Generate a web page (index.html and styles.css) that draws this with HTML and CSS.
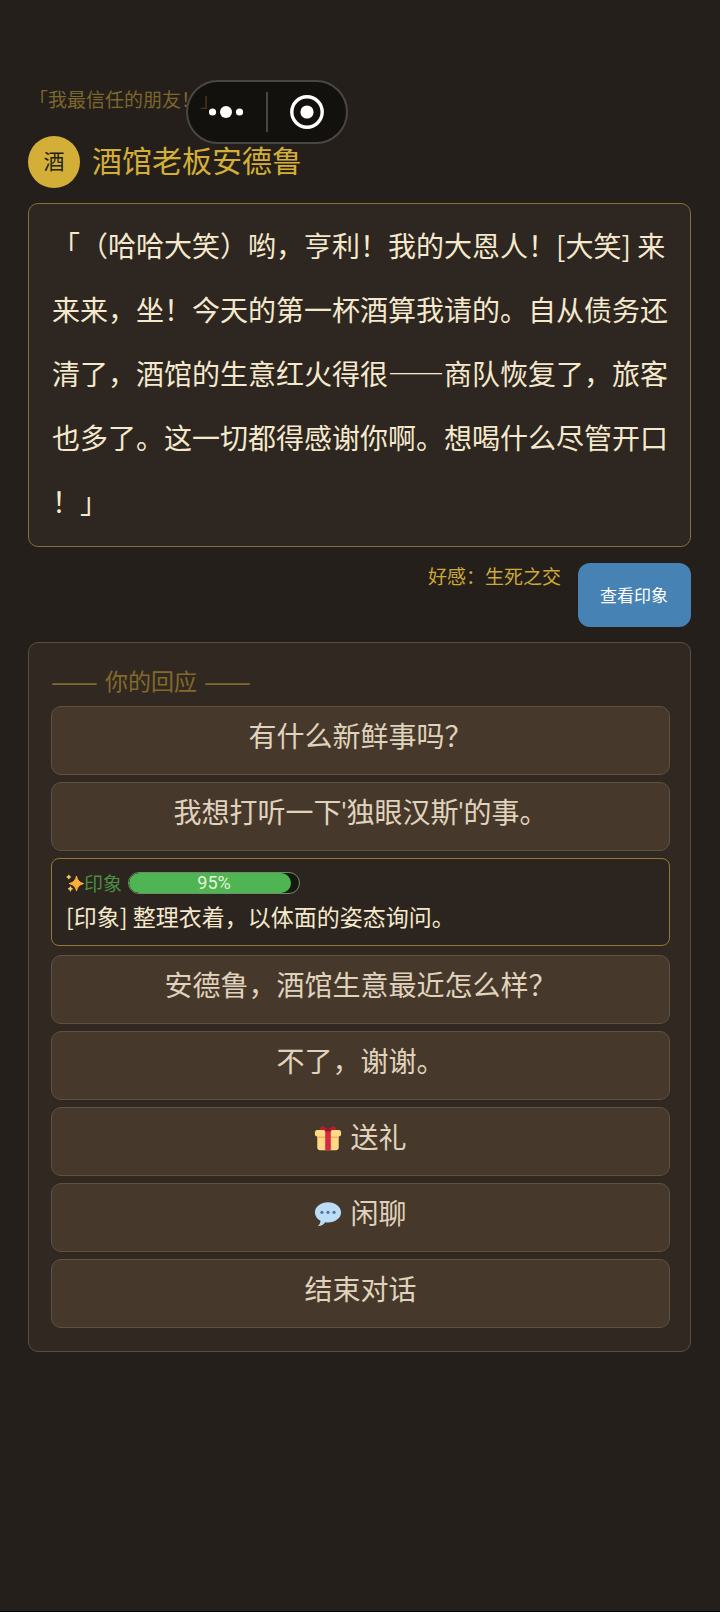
FILE: index.html
```html
<!DOCTYPE html>
<html lang="zh-CN">
<head>
<meta charset="utf-8">
<meta name="viewport" content="width=device-width, initial-scale=1">
<title>酒馆老板安德鲁</title>
<link rel="stylesheet" href="styles.css">
</head>
<body>
<nav class="capsule">
  <button class="capsule-btn" type="button" aria-label="更多">
    <svg width="36" height="36" viewBox="0 0 36 36" fill="#fff"><circle cx="3.500" cy="18" r="3.6"/><circle cx="17" cy="18" r="6"/><circle cx="30.500" cy="18" r="3.6"/></svg>
  </button>
  <span class="capsule-line"></span>
  <button class="capsule-btn" type="button" aria-label="关闭">
    <svg width="36" height="36" viewBox="0 0 36 36"><circle cx="18" cy="18" r="15.2" fill="none" stroke="#fff" stroke-width="3.4"/><circle cx="18" cy="18" r="6.6" fill="#fff"/></svg>
  </button>
</nav>
<main class="page">
  <p class="motto">「我最信任的朋友！」</p>
  <header class="npc">
    <span class="avatar">酒</span>
    <h1 class="npc-name">酒馆老板安德鲁</h1>
  </header>
  <p class="speech">「（哈哈大笑）哟，亨利！我的大恩人！[大笑] 来来来，坐！今天的第一杯酒算我请的。自从债务还清了，酒馆的生意红火得很——商队恢复了，旅客也多了。这一切都得感谢你啊。想喝什么尽管开口！」</p>
  <div class="status">
    <span class="affinity">好感：生死之交</span>
    <button class="view-btn" type="button">查看印象</button>
  </div>
  <section class="replies">
    <h2 class="replies-title"><span class="dash">——</span><span>你的回应</span><span class="dash">——</span></h2>
    <button class="reply" type="button">有什么新鲜事吗？</button>
    <button class="reply" type="button">我想打听一下'独眼汉斯'的事。</button>
    <button class="check" type="button">
      <span class="check-head">
        <svg class="spark" width="18" height="18" viewBox="0 0 18 18"><path d="M10.5 2 Q11.6 8.2 17.5 9.6 Q11.6 11 10.5 17 Q9.4 11 3.2 9.6 Q9.4 8.2 10.5 2Z" fill="#fdae3b" stroke="#fdae3b" stroke-width="1" stroke-linejoin="round"/><path d="M2.8 0.8 Q3.2 2.6 5 3 Q3.2 3.4 2.8 5.2 Q2.4 3.4 .6 3 Q2.4 2.6 2.8 .8ZM4.4 12.4 Q4.8 14.4 6.8 14.8 Q4.8 15.2 4.4 17.4 Q4 15.2 2 14.8 Q4 14.4 4.4 12.4Z" fill="#fdd35c" stroke="#fdd35c" stroke-width=".6"/></svg>
        <span class="check-label">印象</span>
        <span class="bar"><span class="bar-fill" style="width:95%"></span><span class="bar-text">95%</span></span>
      </span>
      <span class="check-text">[印象] 整理衣着，以体面的姿态询问。</span>
    </button>
    <button class="reply" type="button">安德鲁，酒馆生意最近怎么样？</button>
    <button class="reply" type="button">不了，谢谢。</button>
    <button class="reply" type="button">
      <svg class="emoji" width="28" height="28" viewBox="0 0 30 30"><path d="M6 7 Q7 1 11 3 L15 6 L19 3 Q23 1 24 7Z" fill="#b31f32"/><path d="M3.500 12H26.500V25a3 3 0 0 1-3 3h-17a3 3 0 0 1-3-3Z" fill="#ffd983"/><rect x="1" y="6.500" width="28" height="7" rx="2.500" fill="#ffd983"/><path d="M3.500 13.500h23v1.500h-23Z" fill="#efb05b"/><path d="M12 6.500h6V28h-6Z" fill="#d42940"/><path d="M11 6.500 Q15 3.500 19 6.500 L18 8h-6Z" fill="#a0162b"/></svg>
      送礼</button>
    <button class="reply" type="button">
      <svg class="emoji" width="28" height="28" viewBox="0 0 30 30"><path d="M15 2.500C7.300 2.500 1 7.200 1 13.300c0 3.700 2.300 6.900 5.900 8.900.1 2.400-1 4.300-2.900 5.600 4 .1 6.400-1.700 8-4 1 .2 2 .2 3 .2 7.700 0 14-4.800 14-10.700S22.700 2.500 15 2.500Z" fill="#bddcf6"/><g fill="#4a78a0"><circle cx="8.500" cy="13.200" r="1.700"/><circle cx="15" cy="13.200" r="1.700"/><circle cx="21.500" cy="13.200" r="1.700"/></g></svg>
      闲聊</button>
    <button class="reply" type="button">结束对话</button>
  </section>
</main>
</body>
</html>
```
FILE: styles.css
```css
* { box-sizing: border-box; }

body {
  margin: 0;
  min-height: 100vh;
  background: #241f1b;
  border-bottom: 1px solid #000;
  color: #f5e9cd;
  font-family: "Noto Sans CJK SC", sans-serif;
  text-spacing-trim: space-all;
}

button {
  margin: 0;
  font: inherit;
  color: inherit;
  cursor: pointer;
}

.page { padding: 85px 29px 28px 28px; }

.capsule {
  position: absolute;
  top: 80px;
  left: 186px;
  display: flex;
  align-items: center;
  width: 162px;
  height: 64px;
  border: 2px solid #4a4644;
  border-radius: 32px;
  background: rgba(0, 0, 0, 0.45);
}

.capsule-btn {
  flex: 1;
  display: flex;
  justify-content: center;
  padding: 0;
  border: 0;
  background: none;
}

.capsule-line {
  width: 2px;
  height: 40px;
  background: #4a4644;
}

.motto {
  margin: 0 0 23px;
  padding-left: 1px;
  font-size: 19px;
  line-height: 28px;
  color: #7d672a;
}

.npc {
  display: flex;
  align-items: center;
  gap: 12px;
  margin-bottom: 15px;
}

.avatar {
  display: flex;
  align-items: center;
  justify-content: center;
  width: 52px;
  height: 52px;
  padding-bottom: 4px;
  border-radius: 50%;
  background: #d4af37;
  color: #241f1b;
  font-size: 21px;
}

.npc-name {
  margin: 0;
  padding-bottom: 6px;
  font-size: 30px;
  font-weight: 400;
  line-height: 40px;
  color: #d4af37;
}

.speech {
  margin: 0 0 16px;
  padding: 9px 22px 13px 23px;
  border: 1px solid #86702f;
  border-radius: 10px;
  background: #2e2620;
  font-size: 28px;
  line-height: 64px;
  line-break: anywhere;
}

.status {
  display: flex;
  justify-content: flex-end;
  gap: 17px;
  margin-bottom: 15px;
}

.affinity {
  font-size: 19px;
  line-height: 26px;
  color: #cda936;
}

.view-btn {
  height: 64px;
  padding: 0 23px 2px 22px;
  border: 0;
  border-radius: 12px;
  background: #4682b4;
  color: #fff;
  font-size: 17px;
}

.replies {
  display: flex;
  flex-direction: column;
  gap: 7px;
  padding: 20px 20px 23px 22px;
  border: 1px solid #5b4e3d;
  border-radius: 10px;
  background: #322822;
}

.replies-title {
  display: flex;
  gap: 7px;
  margin: 0 0 2px;
  font-size: 23px;
  font-weight: 400;
  line-height: 34px;
  color: #82692c;
}

.dash { font-size: 28px; }

.reply {
  display: flex;
  align-items: center;
  justify-content: center;
  gap: 8px;
  height: 69px;
  padding: 0 8px 6px;
  border: 1px solid #5f513f;
  border-radius: 10px;
  background: #46392b;
  color: #e0d3bd;
  font-family: Roboto, "Noto Sans CJK SC", sans-serif;
  font-size: 28px;
  line-height: 40px;
}

.emoji { margin-bottom: 2px; }

.check {
  display: flex;
  flex-direction: column;
  align-items: flex-start;
  gap: 2px;
  margin-bottom: 2px;
  padding: 10px 14px 12px;
  border: 1px solid #917a31;
  border-radius: 8px;
  background: #2c241e;
  text-align: left;
}

.check-head {
  display: flex;
  align-items: center;
  height: 28px;
}

.check-label {
  margin-right: 6px;
  padding-bottom: 2px;
  font-size: 19px;
  color: #4b8d45;
}

.bar {
  position: relative;
  width: 172px;
  height: 22px;
  overflow: hidden;
  border: 1px solid #6c9065;
  border-radius: 11px;
  background: #14180f;
}

.bar-fill {
  display: block;
  height: 100%;
  border-radius: 11px;
  background: #4fb452;
}

.bar-text {
  position: absolute;
  inset: 0;
  text-align: center;
  font-family: Roboto, sans-serif;
  font-size: 18px;
  line-height: 20px;
  color: #e6f3dc;
}

.check-text {
  font-size: 23px;
  line-height: 34px;
}
```
